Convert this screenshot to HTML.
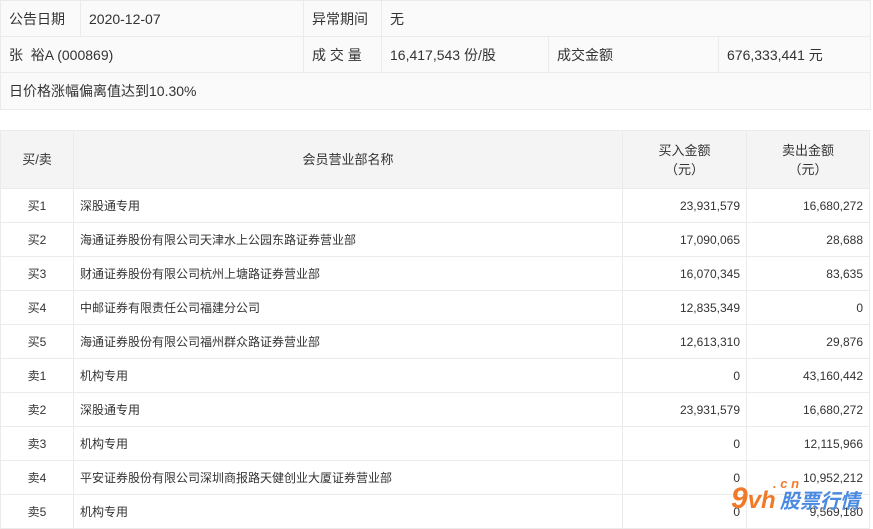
<!DOCTYPE html>
<html><head><meta charset="utf-8"><style>
body{margin:0;background:#fff;font-family:"Liberation Sans","Noto Sans CJK SC",sans-serif;color:#333;width:873px;height:528px;overflow:hidden;position:relative}
table{border-collapse:collapse;position:absolute;left:0;table-layout:fixed}
td{border:1px solid #ebebeb;padding:0 8px;white-space:nowrap;overflow:hidden}
.t1{top:0;width:870px;background:#fafafa;font-size:14px}
.t1 td{height:35px}
.t2{top:130px;width:869px;font-size:12px}
.t2 td{height:33px;padding:0 6px}
.t2 tr.h td{height:57px;background:#f4f4f4;text-align:center;font-size:13px;line-height:19px}
.c{text-align:center}.r{text-align:right}
.wm{position:absolute;left:731px;top:482px;font-style:italic;font-weight:bold}
</style></head><body>
<table class="t1">
<colgroup><col style="width:80px"><col style="width:223px"><col style="width:78px"><col style="width:167px"><col style="width:170px"><col style="width:152px"></colgroup>
<tr><td>公告日期</td><td>2020-12-07</td><td>异常期间</td><td colspan="3">无</td></tr>
<tr><td colspan="2">张&nbsp; 裕A (000869)</td><td>成 交 量</td><td>16,417,543 份/股</td><td>成交金额</td><td>676,333,441 元</td></tr>
<tr><td colspan="6" style="height:36px">日价格涨幅偏离值达到10.30%</td></tr>
</table>
<table class="t2">
<colgroup><col style="width:73px"><col style="width:549px"><col style="width:124px"><col style="width:123px"></colgroup>
<tr class="h"><td>买/卖</td><td>会员营业部名称</td><td>买入金额<br>（元）</td><td>卖出金额<br>（元）</td></tr>
<tr><td class="c">买1</td><td>深股通专用</td><td class="r">23,931,579</td><td class="r">16,680,272</td></tr>
<tr><td class="c">买2</td><td>海通证券股份有限公司天津水上公园东路证券营业部</td><td class="r">17,090,065</td><td class="r">28,688</td></tr>
<tr><td class="c">买3</td><td>财通证券股份有限公司杭州上塘路证券营业部</td><td class="r">16,070,345</td><td class="r">83,635</td></tr>
<tr><td class="c">买4</td><td>中邮证券有限责任公司福建分公司</td><td class="r">12,835,349</td><td class="r">0</td></tr>
<tr><td class="c">买5</td><td>海通证券股份有限公司福州群众路证券营业部</td><td class="r">12,613,310</td><td class="r">29,876</td></tr>
<tr><td class="c">卖1</td><td>机构专用</td><td class="r">0</td><td class="r">43,160,442</td></tr>
<tr><td class="c">卖2</td><td>深股通专用</td><td class="r">23,931,579</td><td class="r">16,680,272</td></tr>
<tr><td class="c">卖3</td><td>机构专用</td><td class="r">0</td><td class="r">12,115,966</td></tr>
<tr><td class="c">卖4</td><td>平安证券股份有限公司深圳商报路天健创业大厦证券营业部</td><td class="r">0</td><td class="r">10,952,212</td></tr>
<tr><td class="c">卖5</td><td>机构专用</td><td class="r">0</td><td class="r">9,569,180</td></tr>
</table>
<div class="wm"><span style="color:#f07a2a;font-size:30px">9</span><span style="color:#f07a2a;font-size:24px">vh</span><span style="color:#4a8ae0;font-size:20px;margin-left:4px">股票行情</span><span style="position:absolute;left:42px;top:-6px;color:#f07a2a;font-size:13px">. c n</span></div>
</body></html>
